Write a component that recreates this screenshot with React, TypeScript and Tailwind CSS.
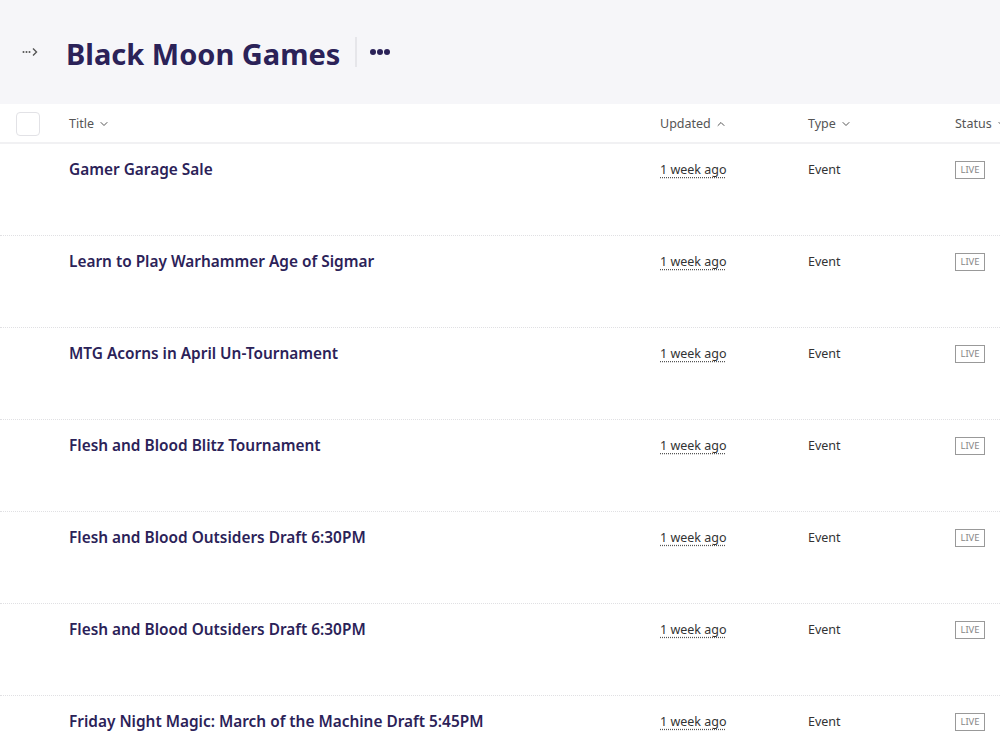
import { ChevronDown, ChevronUp } from 'lucide-react';

const ROWS = [
  'Gamer Garage Sale',
  'Learn to Play Warhammer Age of Sigmar',
  'MTG Acorns in April Un-Tournament',
  'Flesh and Blood Blitz Tournament',
  'Flesh and Blood Outsiders Draft 6:30PM',
  'Flesh and Blood Outsiders Draft 6:30PM',
  'Friday Night Magic: March of the Machine Draft 5:45PM',
];

function ExpandIcon() {
  return (
    <svg width="16" height="10" viewBox="0 0 16 10" fill="none">
      <circle cx="1.5" cy="5" r="1" fill="#555" />
      <circle cx="4.5" cy="5" r="1" fill="#555" />
      <circle cx="7.5" cy="5" r="1" fill="#555" />
      <path d="M11 1.5 L14.5 5 L11 8.5" stroke="#555" strokeWidth="1.4" />
    </svg>
  );
}

export default function App() {
  return (
    <div
      className="w-[1000px] h-[750px] overflow-hidden bg-white text-[#333]"
      style={{ fontFamily: '"Noto Sans", "Open Sans", sans-serif' }}
    >
      {/* Page header */}
      <div className="h-[104px] bg-[#f6f6f9] flex items-center pl-[22px]">
        <ExpandIcon />
        <h1 className="ml-[28px] text-[29px] font-bold text-[#2b2258] leading-none pt-[3px]">
          Black Moon Games
        </h1>
        <div className="ml-[15px] w-[2px] h-[30px] bg-[#e6e6ea]" />
        <div className="ml-[13px] flex gap-[1px] pb-[1px]">
          <span className="w-[6px] h-[6px] rounded-full bg-[#2b2258]" />
          <span className="w-[6px] h-[6px] rounded-full bg-[#2b2258]" />
          <span className="w-[6px] h-[6px] rounded-full bg-[#2b2258]" />
        </div>
      </div>

      {/* Table */}
      <div className="w-[1100px]">
        <div className="h-[40px] flex items-center pt-[2px] border-b-2 border-[#f1f1f3] text-[12.5px] text-[#555]">
          <div className="w-[69px] pl-[16px] shrink-0 pb-[1px]">
            <div className="w-[24px] h-[24px] rounded-[4px] border border-[#e2e2e6] bg-white" />
          </div>
          <div className="w-[591px] shrink-0 flex items-center gap-1">
            Title <ChevronDown size={12} strokeWidth={2} />
          </div>
          <div className="w-[148px] shrink-0 flex items-center gap-1">
            Updated <ChevronUp size={12} strokeWidth={2} />
          </div>
          <div className="w-[147px] shrink-0 flex items-center gap-1">
            Type <ChevronDown size={12} strokeWidth={2} />
          </div>
          <div className="flex items-center gap-1">
            Status <ChevronDown size={12} strokeWidth={2} />
          </div>
        </div>

        {ROWS.map((title, i) => (
          <div
            key={i}
            className="h-[92px] flex items-start pt-[15px] border-b border-dotted border-[#e0e0e3]"
          >
            <div className="w-[69px] shrink-0" />
            <div className="w-[591px] shrink-0 text-[15.4px] font-semibold text-[#2b2258] leading-[22px]">
              {title}
            </div>
            <div className="w-[148px] shrink-0 text-[12.5px] leading-[22px]">
              <span className="underline decoration-dotted underline-offset-[3px] decoration-[#555]">
                1 week ago
              </span>
            </div>
            <div className="w-[147px] shrink-0 text-[12.5px] leading-[22px]">Event</div>
            <div className="pt-[2px] flex">
              <span className="flex items-center justify-center w-[30px] h-[18px] border border-[#999] text-[9.5px] text-[#888] leading-none">
                LIVE
              </span>
            </div>
          </div>
        ))}
      </div>
    </div>
  );
}
